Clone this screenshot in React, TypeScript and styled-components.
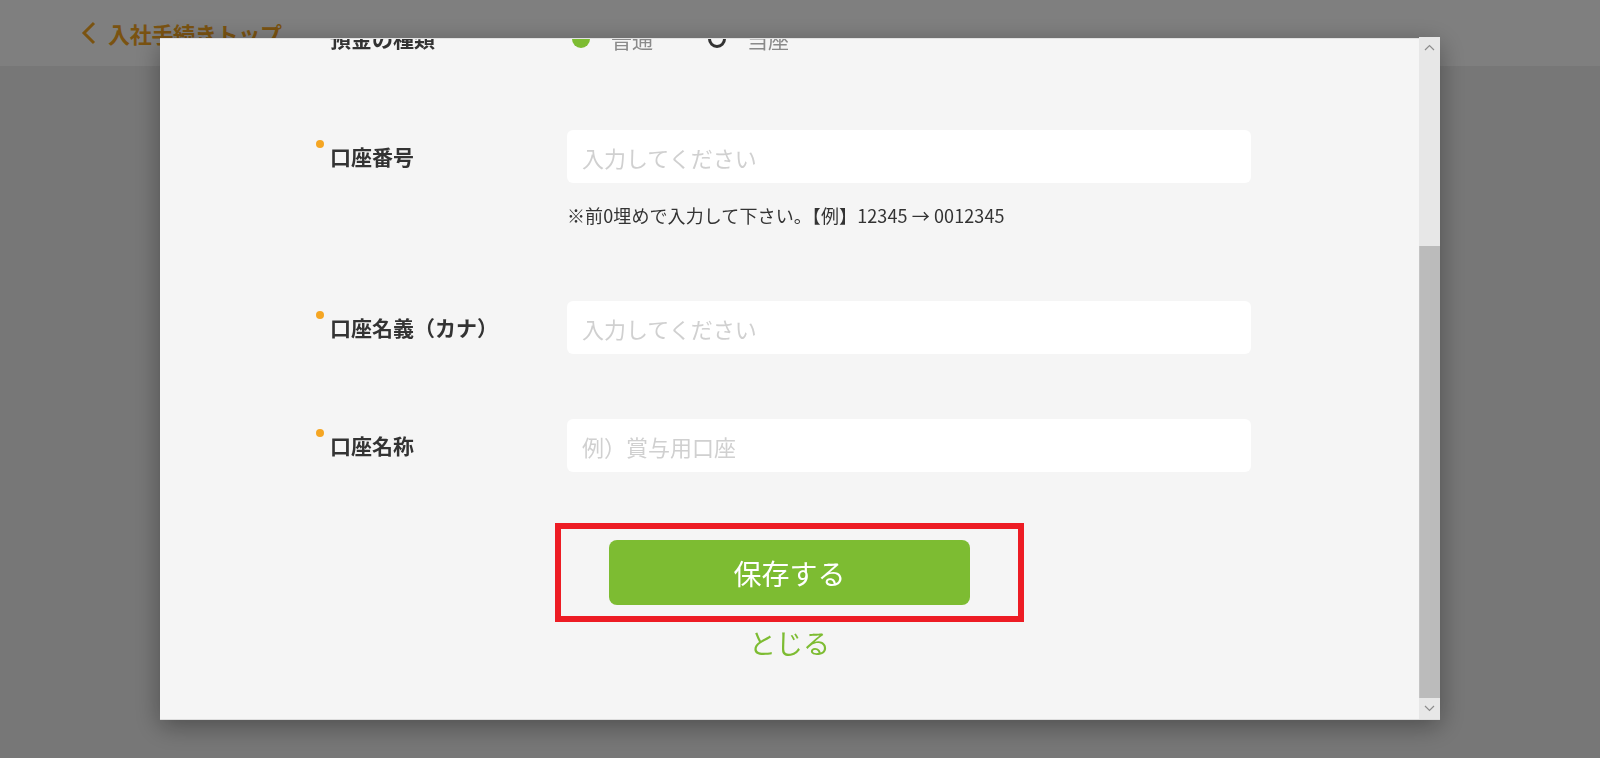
import React, { useLayoutEffect, useRef, useState } from "react";
import styled, { createGlobalStyle } from "styled-components";

const GlobalStyle = createGlobalStyle`
  html, body {
    margin: 0;
    padding: 0;
    height: 100%;
  }
  body {
    background: #eeeeee;
    font-family: "Noto Sans CJK JP", "Noto Sans", sans-serif;
    color: #333333;
  }
  * {
    box-sizing: border-box;
  }
`;

const ORANGE = "#f5a623";
const GREEN = "#7dbc32";

const Page = styled.div`
  min-height: 100vh;
`;

const Header = styled.header`
  height: 66px;
  background: #ffffff;
  display: flex;
  align-items: center;
  padding-left: 80px;
`;

const BackLink = styled.a`
  display: flex;
  align-items: center;
  gap: 11px;
  color: ${ORANGE};
  font-size: 22px;
  font-weight: 700;
  text-decoration: none;
  letter-spacing: -0.3px;
`;

const Overlay = styled.div`
  position: fixed;
  inset: 0;
  background: rgba(0, 0, 0, 0.5);
  display: flex;
  align-items: center;
  justify-content: center;
`;

const Modal = styled.div`
  width: 1280px;
  height: 682px;
  display: flex;
  background: #f5f5f5;
  border-top: 1px solid #e2e2e2;
  border-bottom: 1px solid #dddddd;
  box-shadow: 0 6px 24px rgba(0, 0, 0, 0.35);
`;

const ScrollArea = styled.div`
  flex: 1;
  overflow: hidden;
`;

const Form = styled.form`
  display: flex;
  flex-direction: column;
  padding: 20px 0 61px 170px;
`;

const Rows = styled.div`
  display: flex;
  flex-direction: column;
  gap: 65px;
`;

const Row = styled.div`
  display: flex;
  align-items: flex-start;
`;

const Label = styled.label`
  position: relative;
  width: 237px;
  flex-shrink: 0;
  height: 53px;
  line-height: 53px;
  font-size: 21px;
  font-weight: 700;
  color: #333333;

  &::before {
    content: "";
    position: absolute;
    left: -14px;
    top: 10px;
    width: 8px;
    height: 8px;
    border-radius: 50%;
    background: ${ORANGE};
  }
`;

const Field = styled.div`
  width: 684px;
  display: flex;
  flex-direction: column;
`;

const TextInput = styled.input`
  width: 100%;
  height: 53px;
  border: none;
  border-radius: 6px;
  background: #ffffff;
  padding: 0 15px;
  font-family: inherit;
  font-size: 22px;
  color: #333333;
  outline: none;

  &::placeholder {
    color: #d0d0d0;
  }
`;

const Note = styled.p`
  margin: 20px 0 8px;
  font-size: 18px;
  line-height: 25px;
  color: #333333;
  letter-spacing: 0.1px;
`;

const RadioGroup = styled.div`
  height: 53px;
  display: flex;
  align-items: center;
  padding-left: 5px;
`;

const RadioOption = styled.label`
  display: flex;
  align-items: center;
  gap: 21px;
  margin-right: 55px;
  font-size: 21px;
  color: #8a8a8a;
`;

const RadioMark = styled.span<{ $checked?: boolean }>`
  width: 18px;
  height: 18px;
  border-radius: 50%;
  background: ${(p) => (p.$checked ? GREEN : "transparent")};
  border: ${(p) => (p.$checked ? "none" : "3px solid #333333")};
`;

const ButtonFrame = styled.div`
  align-self: center;
  flex-shrink: 0;
  margin: 51px 0 0 -170px;
  width: 469px;
  height: 99px;
  border: 6px solid #ed1c24;
  display: flex;
  align-items: center;
  justify-content: center;
`;

const SaveButton = styled.button`
  width: 361px;
  height: 65px;
  border: none;
  border-radius: 8px;
  background: ${GREEN};
  color: #ffffff;
  font-family: inherit;
  font-size: 28px;
  cursor: pointer;
`;

const CloseLink = styled.a`
  align-self: center;
  margin: 6px 0 0 -170px;
  font-size: 27px;
  line-height: 30px;
  color: ${GREEN};
  text-decoration: none;
  cursor: pointer;
`;

const Scrollbar = styled.div`
  width: 21px;
  flex-shrink: 0;
  display: flex;
  flex-direction: column;
  background: #e7e7e7;
  margin-top: -2px;
`;

const ScrollButton = styled.div`
  height: 21px;
  flex-shrink: 0;
  display: flex;
  align-items: center;
  justify-content: center;
  background: #e7e7e7;
`;

const Track = styled.div`
  flex: 1;
  display: flex;
  flex-direction: column;
`;

const Thumb = styled.div`
  background: #bbbbbb;
  border-left: 1px solid #c4c4c4;
`;

function Chevron({ up }: { up?: boolean }) {
  return (
    <svg width="11" height="7" viewBox="0 0 11 7">
      <polyline
        points={up ? "1,6 5.5,1.5 10,6" : "1,1 5.5,5.5 10,1"}
        fill="none"
        stroke="#8c8c8c"
        strokeWidth="1.2"
      />
    </svg>
  );
}

export default function App() {
  const scrollRef = useRef<HTMLDivElement>(null);
  const [thumb, setThumb] = useState({ offset: 0, size: 1 });

  useLayoutEffect(() => {
    const el = scrollRef.current;
    if (!el) return;
    el.scrollTop = el.scrollHeight;
    const total = el.scrollHeight;
    const visible = el.clientHeight;
    setThumb({ offset: el.scrollTop / total, size: visible / total });
  }, []);

  return (
    <Page>
      <GlobalStyle />
      <Header>
        <BackLink href="#">
          <svg width="17" height="24" viewBox="0 0 17 24">
            <polyline
              points="14,2 4,12 14,22"
              fill="none"
              stroke={ORANGE}
              strokeWidth="3"
            />
          </svg>
          入社手続きトップ
        </BackLink>
      </Header>

      <Overlay>
        <Modal>
          <ScrollArea ref={scrollRef}>
            <Form onSubmit={(e) => e.preventDefault()}>
              <Rows>
                <Row>
                  <Label>金融機関名</Label>
                  <Field>
                    <TextInput placeholder="入力してください" />
                  </Field>
                </Row>
                <Row>
                  <Label>支店名</Label>
                  <Field>
                    <TextInput placeholder="入力してください" />
                  </Field>
                </Row>
                <Row>
                  <Label>預金の種類</Label>
                  <RadioGroup>
                    <RadioOption>
                      <RadioMark $checked />
                      普通
                    </RadioOption>
                    <RadioOption>
                      <RadioMark />
                      当座
                    </RadioOption>
                  </RadioGroup>
                </Row>
                <Row>
                  <Label>口座番号</Label>
                  <Field>
                    <TextInput placeholder="入力してください" />
                    <Note>※前0埋めで入力して下さい。【例】12345 → 0012345</Note>
                  </Field>
                </Row>
                <Row>
                  <Label>口座名義（カナ）</Label>
                  <Field>
                    <TextInput placeholder="入力してください" />
                  </Field>
                </Row>
                <Row>
                  <Label>口座名称</Label>
                  <Field>
                    <TextInput placeholder="例）賞与用口座" />
                  </Field>
                </Row>
              </Rows>
              <ButtonFrame>
                <SaveButton type="submit">保存する</SaveButton>
              </ButtonFrame>
              <CloseLink>とじる</CloseLink>
            </Form>
          </ScrollArea>
          <Scrollbar>
            <ScrollButton>
              <Chevron up />
            </ScrollButton>
            <Track>
              <div style={{ flexBasis: `${thumb.offset * 100}%` }} />
              <Thumb style={{ flexBasis: `${thumb.size * 100}%` }} />
            </Track>
            <ScrollButton>
              <Chevron />
            </ScrollButton>
          </Scrollbar>
        </Modal>
      </Overlay>
    </Page>
  );
}
